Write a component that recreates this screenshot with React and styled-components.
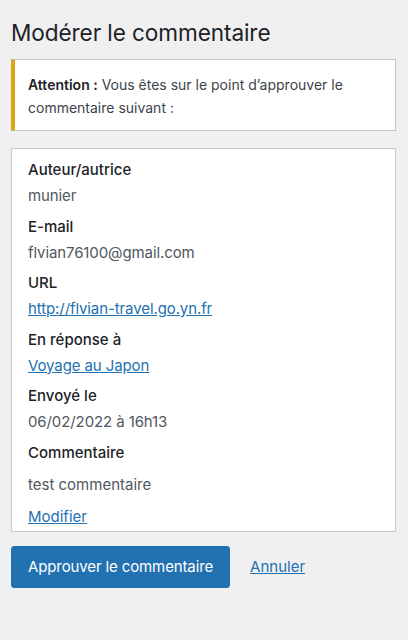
import styled, { createGlobalStyle } from 'styled-components';

const GlobalStyle = createGlobalStyle`
    html, body {
        margin: 0;
        padding: 0;
        background: #f0f0f1;
    }
    body {
        font-family: "Inter", "Liberation Sans", sans-serif;
        color: #1d2327;
        -webkit-font-smoothing: antialiased;
    }
`;

const rows = [
    { label: 'Auteur/autrice', value: 'munier' },
    { label: 'E-mail', value: 'flvian76100@gmail.com' },
    { label: 'URL', value: 'http://flvian-travel.go.yn.fr', link: true },
    { label: 'En réponse à', value: 'Voyage au Japon', link: true },
    { label: 'Envoyé le', value: '06/02/2022 à 16h13' },
];

function App(){
    return(
        <>
            <GlobalStyle />
            <Page>
                <Title>Modérer le commentaire</Title>
                <Notice>
                    <p><strong>Attention :</strong> Vous êtes sur le point d’approuver le commentaire suivant :</p>
                </Notice>
                <Card>
                    {rows.map((row) => (
                        <Field key={row.label}>
                            <Label>{row.label}</Label>
                            <Value>
                                {row.link ? <a href="#">{row.value}</a> : row.value}
                            </Value>
                        </Field>
                    ))}
                    <Field>
                        <Label>Commentaire</Label>
                        <Comment>test commentaire</Comment>
                        <EditLink href="#">Modifier</EditLink>
                    </Field>
                </Card>
                <Actions>
                    <PrimaryButton type="button">Approuver le commentaire</PrimaryButton>
                    <CancelLink href="#">Annuler</CancelLink>
                </Actions>
            </Page>
        </>
    )
}

export default App;

const Page = styled.div`
    padding: 0 12px 0 11px;
    min-height: 640px;
    box-sizing: border-box;
`;

const Title = styled.h1`
    margin: 0;
    padding: 19px 0 12px;
    font-size: 22.6px;
    font-weight: 400;
    line-height: 28px;
    letter-spacing: -0.1px;
    color: #1d2327;
`;

const Notice = styled.div`
    background: #fff;
    border: 1px solid #c3c4c7;
    border-left: 4px solid #dba617;
    padding: 6px 12px 4px 13px;

    p {
        margin: 7px 0;
        font-size: 14px;
        line-height: 23px;
        color: #3c434a;
    }
    strong {
        font-weight: 600;
        color: #1d2327;
    }
`;

const Card = styled.div`
    margin-top: 17px;
    background: #fff;
    border: 1px solid #c8c8ca;
    padding: 8px 16px 3px;
`;

const Field = styled.div`
    display: flex;
    flex-direction: column;
    align-items: flex-start;
    margin-bottom: 4.5px;

    &:last-child {
        margin-bottom: 0;
    }
`;

const Label = styled.div`
    font-size: 15px;
    font-weight: 500;
    line-height: 26px;
    color: #1d2327;
`;

const Value = styled.div`
    font-size: 15px;
    line-height: 26px;
    letter-spacing: -0.1px;
    color: #50575e;

    a {
        color: #2271b1;
        text-decoration: underline;
    }
`;

const Comment = styled.p`
    margin: 6px 0 0;
    font-size: 15px;
    line-height: 26px;
    color: #50575e;
`;

const EditLink = styled.a`
    margin-top: 8px;
    font-size: 15px;
    line-height: 22px;
    color: #2271b1;
    text-decoration: underline;
`;

const Actions = styled.div`
    display: flex;
    align-items: center;
    margin-top: 14px;
`;

const PrimaryButton = styled.button`
    height: 42px;
    padding: 0 16px;
    background: #2271b1;
    border: 1px solid #2271b1;
    border-radius: 3px;
    color: #fff;
    font-family: inherit;
    font-size: 15px;
    line-height: 40px;
    letter-spacing: -0.12px;
    cursor: pointer;
`;

const CancelLink = styled.a`
    margin-left: 20px;
    font-size: 15px;
    color: #2271b1;
    text-decoration: underline;
`;
